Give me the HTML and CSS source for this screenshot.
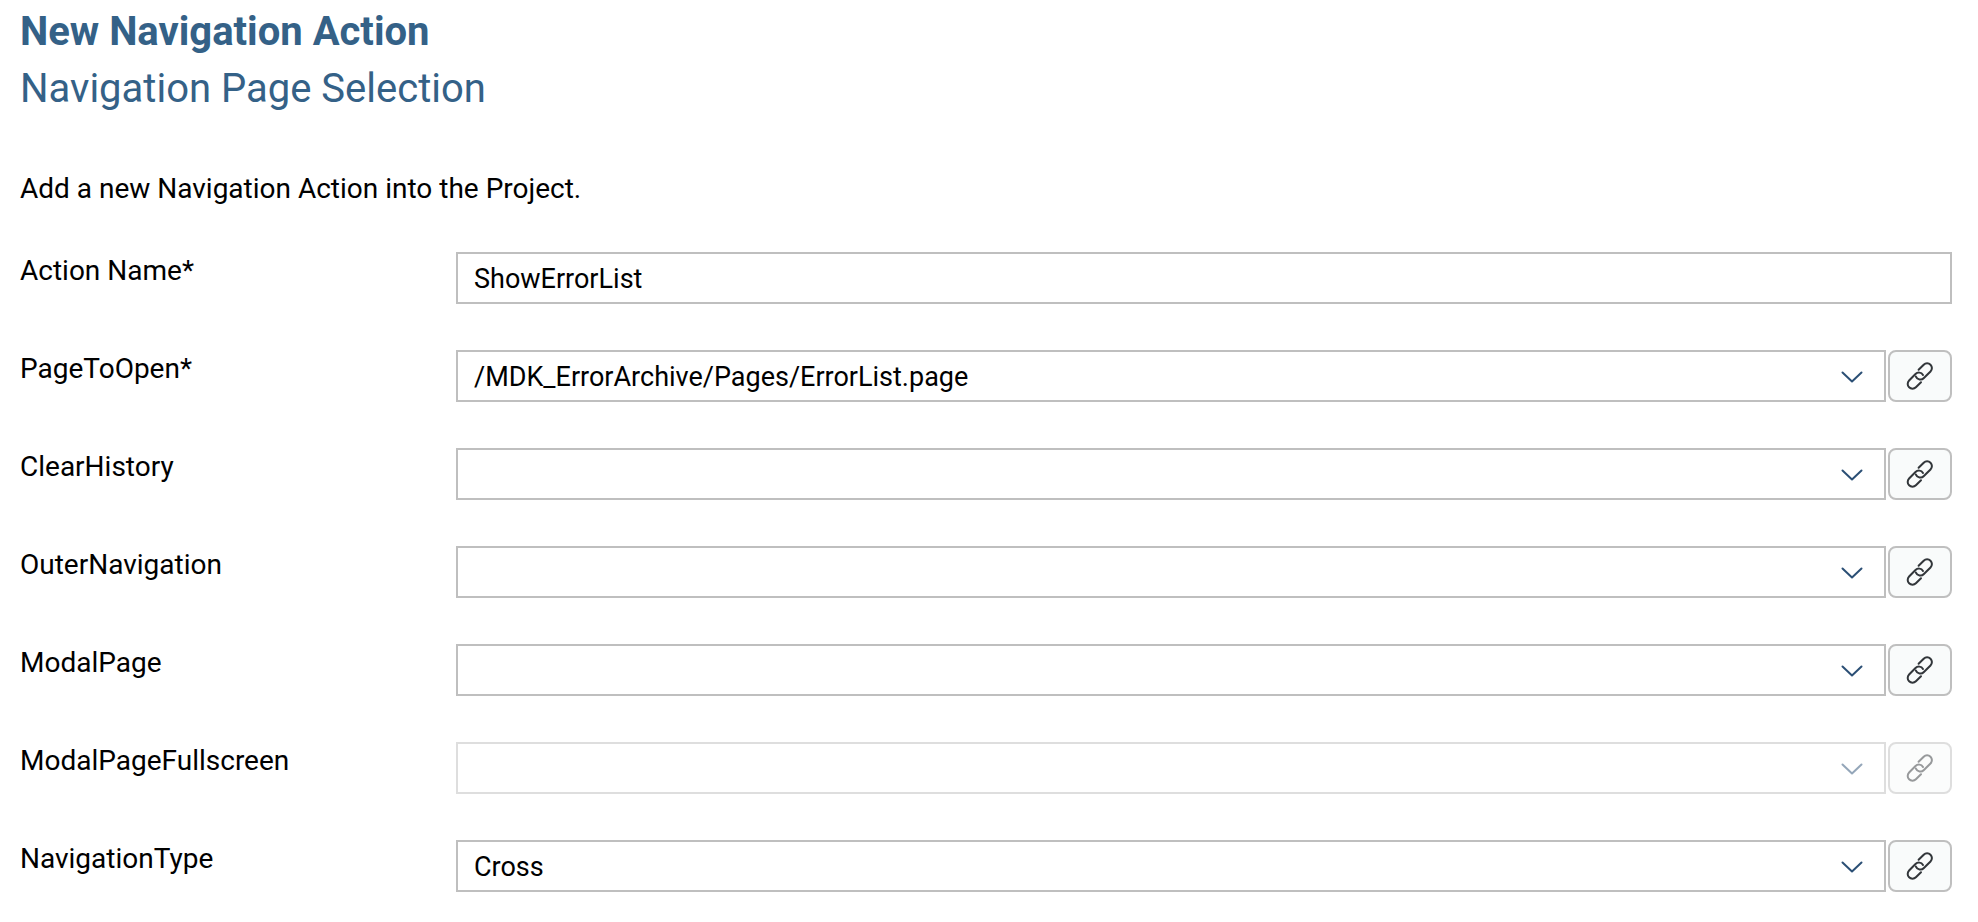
FILE: index.html
```
<!DOCTYPE html>
<html lang="en">
<head>
<meta charset="utf-8">
<title>New Navigation Action</title>
<link rel="stylesheet" href="styles.css">
</head>
<body>
<svg class="sprite" aria-hidden="true">
  <symbol id="link" viewBox="0 0 28 28">
    <path d="M12.600 7.800L17.700 2.700A4.800 4.800 0 0 1 24.500 9.500L17.900 16A4.800 4.800 0 0 1 9.900 14.600M15 20.200L9.900 25.300A4.800 4.800 0 0 1 3.100 18.500L9.500 12A4.800 4.800 0 0 1 17 12.900"/>
  </symbol>
  <symbol id="chevron" viewBox="0 0 22 12">
    <path d="M1.500 1.500L11 10.500L20.500 1.500"/>
  </symbol>
</svg>
<main class="wizard">
  <h1 class="title">New Navigation Action</h1>
  <h2 class="subtitle">Navigation Page Selection</h2>
  <p class="intro">Add a new Navigation Action into the Project.</p>
  <form class="form">
    <div class="row">
      <label class="label" for="name">Action Name*</label>
      <input class="field" id="name" type="text" value="ShowErrorList">
    </div>
    <div class="row">
      <label class="label" for="page">PageToOpen*</label>
      <div class="control">
        <div class="combo"><select class="field" id="page"><option>/MDK_ErrorArchive/Pages/ErrorList.page</option></select><svg class="chevron"><use href="#chevron"/></svg></div>
        <button class="link" type="button" aria-label="Bind PageToOpen"><svg class="icon"><use href="#link"/></svg></button>
      </div>
    </div>
    <div class="row">
      <label class="label" for="clear">ClearHistory</label>
      <div class="control">
        <div class="combo"><select class="field" id="clear"><option></option></select><svg class="chevron"><use href="#chevron"/></svg></div>
        <button class="link" type="button" aria-label="Bind ClearHistory"><svg class="icon"><use href="#link"/></svg></button>
      </div>
    </div>
    <div class="row">
      <label class="label" for="outer">OuterNavigation</label>
      <div class="control">
        <div class="combo"><select class="field" id="outer"><option></option></select><svg class="chevron"><use href="#chevron"/></svg></div>
        <button class="link" type="button" aria-label="Bind OuterNavigation"><svg class="icon"><use href="#link"/></svg></button>
      </div>
    </div>
    <div class="row">
      <label class="label" for="modal">ModalPage</label>
      <div class="control">
        <div class="combo"><select class="field" id="modal"><option></option></select><svg class="chevron"><use href="#chevron"/></svg></div>
        <button class="link" type="button" aria-label="Bind ModalPage"><svg class="icon"><use href="#link"/></svg></button>
      </div>
    </div>
    <div class="row">
      <label class="label" for="full">ModalPageFullscreen</label>
      <div class="control disabled">
        <div class="combo"><select class="field" id="full" disabled><option></option></select><svg class="chevron"><use href="#chevron"/></svg></div>
        <button class="link" type="button" disabled aria-label="Bind ModalPageFullscreen"><svg class="icon"><use href="#link"/></svg></button>
      </div>
    </div>
    <div class="row">
      <label class="label" for="type">NavigationType</label>
      <div class="control">
        <div class="combo"><select class="field" id="type"><option>Cross</option></select><svg class="chevron"><use href="#chevron"/></svg></div>
        <button class="link" type="button" aria-label="Bind NavigationType"><svg class="icon"><use href="#link"/></svg></button>
      </div>
    </div>
  </form>
</main>
</body>
</html>
```
FILE: styles.css
```
* { box-sizing: border-box; }
body {
  margin: 0;
  background: #fff;
  color: #000;
  font: 28px/36px Roboto, "Noto Sans", sans-serif;
}
.sprite { display: none; }
.wizard { padding: 4px 26px 30px 20px; }
.title, .subtitle {
  margin: 0;
  color: #346187;
  font-size: 40px;
  line-height: 56px;
}
.title { font-weight: 700; margin-bottom: 1px; }
.subtitle { font-weight: 400; }
.intro { margin: 54px 0 45px; }
.form { display: grid; gap: 46px; }
.row {
  display: grid;
  grid-template-columns: 436px 1fr;
  align-items: start;
}
.label { justify-self: start; padding-top: 1px; }
.control { display: flex; gap: 2px; }
.combo { position: relative; flex: 1; }
.field {
  appearance: none;
  display: block;
  width: 100%;
  height: 52px;
  margin: 0;
  padding: 2px 16px 0;
  border: 2px solid #bfbfbf;
  border-radius: 0;
  background: #fff;
  color: #000;
  font: inherit;
  font-size: 27px;
}
.chevron {
  position: absolute;
  top: 21px;
  right: 23px;
  width: 22px;
  height: 12px;
  fill: none;
  stroke: #2b4f75;
  stroke-width: 2;
  stroke-linecap: round;
  stroke-linejoin: round;
  pointer-events: none;
}
.link {
  display: grid;
  place-items: center;
  width: 64px;
  height: 52px;
  padding: 0;
  border: 2px solid #bfbfbf;
  border-radius: 8px;
  background: #f9fbfb;
}
.icon {
  width: 28px;
  height: 28px;
  fill: none;
  stroke: #32363a;
  stroke-width: 2;
  stroke-linecap: round;
}
.disabled { opacity: 0.5; }
.disabled .field { opacity: 1; }
```
